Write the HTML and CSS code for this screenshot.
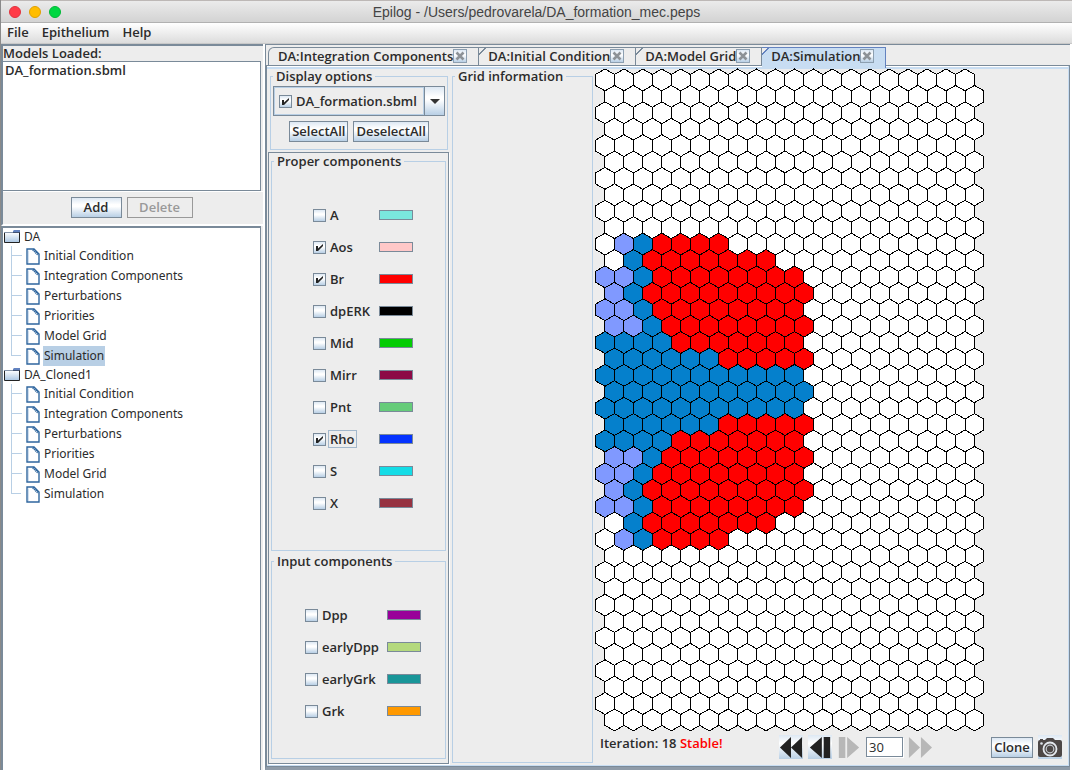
FILE: index.html
```html
<!DOCTYPE html>
<html lang="en">
<head>
<meta charset="utf-8">
<title>Epilog - /Users/pedrovarela/DA_formation_mec.peps</title>
<link rel="stylesheet" href="styles.css">
</head>
<body>
<svg class="defs" aria-hidden="true">
  <symbol id="folder" viewBox="0 0 16 14">
    <path d="M9 3V1l1-1h6v3z" fill="#6382bf"/>
    <path d="M.5 2.500h15v10H.5z" fill="url(#fold)" stroke="#222"/>
    <path d="M9 2h6" stroke="#6382bf"/>
    <path d="M0 2.500h9" stroke="#8493a8"/>
  </symbol>
  <symbol id="doc" viewBox="0 0 14 17">
    <path d="M1 1h7l5 5v10H1z" fill="#fff" stroke="#2f669e" stroke-width="1.400"/>
    <path d="M2.500 15V2.500" stroke="#cfdff0"/>
    <path d="M7 1.500l5.500 5.500" stroke="#2f669e" stroke-width="2.400" stroke-dasharray="1.300 .6"/>
  </symbol>
  <symbol id="close" viewBox="0 0 12 12">
    <path d="M2.500 2.500l7 7M9.500 2.500l-7 7" stroke="#8d9297" stroke-width="2.600"/>
  </symbol>
  <linearGradient id="fold" x1="0" y1="0" x2="0" y2="1"><stop offset="0" stop-color="#fff"/><stop offset="1" stop-color="#a9c5e2"/></linearGradient>
</svg>
<div class="window">
  <header class="titlebar">
    <div class="lights"><span class="light red"></span><span class="light amber"></span><span class="light green"></span></div>
    <h1 class="title">Epilog - /Users/pedrovarela/DA_formation_mec.peps</h1>
  </header>
  <nav class="menubar">
    <button class="menu" type="button">File</button>
    <button class="menu" type="button">Epithelium</button>
    <button class="menu" type="button">Help</button>
  </nav>
  <div class="body">
    <aside class="side">
      <section class="models">
        <h2 class="models-title">Models Loaded:</h2>
        <ul class="model-list"><li>DA_formation.sbml</li></ul>
        <div class="model-actions">
          <button class="btn add" type="button">Add</button>
          <button class="btn delete" type="button" disabled>Delete</button>
        </div>
      </section>
      <section class="tree" id="tree"></section>
    </aside>
    <main class="work">
      <div class="tabs">
        <div class="tab"><span>DA:Integration Components</span><button class="close" type="button" aria-label="Close"><svg><use href="#close"/></svg></button></div>
        <div class="tab"><span>DA:Initial Condition</span><button class="close" type="button" aria-label="Close"><svg><use href="#close"/></svg></button></div>
        <div class="tab"><span>DA:Model Grid</span><button class="close" type="button" aria-label="Close"><svg><use href="#close"/></svg></button></div>
        <div class="tab active"><span>DA:Simulation</span><button class="close" type="button" aria-label="Close"><svg><use href="#close"/></svg></button></div>
      </div>
      <div class="pane">
        <div class="options">
          <fieldset class="group display">
            <legend>Display options</legend>
            <div class="combo">
              <label class="combo-value"><input class="check" type="checkbox" checked>DA_formation.sbml</label>
              <button class="combo-arrow" type="button" aria-label="Open list"><svg viewBox="0 0 10 5"><path d="M0 0h10L5 5z" fill="#333"/></svg></button>
            </div>
            <div class="select-actions">
              <button class="btn" type="button">SelectAll</button>
              <button class="btn" type="button">DeselectAll</button>
            </div>
          </fieldset>
          <div class="scroll">
            <fieldset class="group proper">
              <legend>Proper components</legend>
              <div class="components" id="proper"></div>
            </fieldset>
            <fieldset class="group inputs">
              <legend>Input components</legend>
              <div class="components" id="inputs"></div>
            </fieldset>
          </div>
        </div>
        <fieldset class="group info"><legend>Grid information</legend></fieldset>
        <div class="stage">
          <svg class="hexes" id="hexes" viewBox="0 0 390 664" width="390" height="664" role="img" aria-label="Epithelium grid"></svg>
          <footer class="controls">
            <p class="status">Iteration: 18 <strong>Stable!</strong></p>
            <div class="player">
              <button class="step" type="button" aria-label="Rewind"><svg viewBox="0 0 26 23"><path d="M1 11.500L13 0v23zM13 11.500L25 0v23z" fill="#222"/></svg></button>
              <button class="step" type="button" aria-label="Step back"><svg viewBox="0 0 26 23"><path d="M2 11.500L15 0v23zM17 0h7v23h-7z" fill="#222"/></svg></button>
              <button class="step" type="button" aria-label="Step forward" disabled><svg viewBox="0 0 26 23"><path d="M2 0h7v23H2zM11 0l13 11.500L11 23z" fill="#b7b7b7"/></svg></button>
              <input class="count" type="text" value="30" aria-label="Number of iterations">
              <button class="step" type="button" aria-label="Fast forward" disabled><svg viewBox="0 0 26 23"><path d="M1 0l12 11.500L1 23zM14 0l12 11.500L14 23z" fill="#b7b7b7"/></svg></button>
            </div>
            <button class="btn clone" type="button">Clone</button>
            <button class="step camera" type="button" aria-label="Save picture"><svg viewBox="0 0 24 23"><path d="M2 3h3v1h2l2-2h6l2 2h5q2 0 2 2v13q0 2-2 2H2q-2 0-2-2V6q0-2 2-2z" fill="#4d4746"/><circle cx="12" cy="13" r="6.500" fill="#4d4746" stroke="#e4e8ee" stroke-width="1.800"/><circle cx="12" cy="13" r="3.800" fill="#4d4746" stroke="#c4c9d0" stroke-width="1.200"/><circle cx="3.500" cy="7.500" r="1.300" fill="#dfe5ec"/></svg></button>
          </footer>
        </div>
      </div>
    </main>
  </div>
</div>
<script src="app.js"></script>
</body>
</html>
```
FILE: styles.css
```css
* { box-sizing: border-box; }
body {
  margin: 0;
  font: 600 13px/16px "Open Sans", "Noto Sans", sans-serif;
  color: #2b2b2b;
  background: #ededed;
}
button, input { font: inherit; color: inherit; margin: 0; padding: 0; }
h1, h2, p, ul { margin: 0; padding: 0; font: inherit; list-style: none; }
.defs { position: absolute; width: 0; height: 0; }

.window { display: flex; flex-direction: column; min-height: 100vh; border-left: 1px solid #8a8a8a; }
.titlebar {
  display: grid;
  grid-template-columns: 1fr auto 1fr;
  align-items: center;
  height: 23px;
  padding-top: 1px;
  border-top: 1px solid #bdb8b6;
  border-bottom: 1px solid #b1b1b1;
  background: linear-gradient(#ebebeb, #d3d3d3);
}
.lights { display: flex; gap: 8px; padding-left: 8px; }
.light { width: 12px; height: 12px; border-radius: 50%; }
.red { background: #ff3b47; border: 1px solid #e0333e; }
.amber { background: #ffbd00; border: 1px solid #e0a000; }
.green { background: #00d742; border: 1px solid #00b836; }
.title { font: 14px/16px "Liberation Sans", Arial, sans-serif; color: #444; }
.menubar {
  display: flex;
  gap: 13px;
  height: 21px;
  padding: 0 6px 2px;
  background: linear-gradient(#fff, #dcdcdc);
  border-bottom: 1px solid #c8c8c8;
}
.menu { border: 0; background: none; }

.body { flex: 1; display: flex; gap: 2px; background: #fff; }
.side { flex: 0 0 262px; display: flex; flex-direction: column; background: #ededed; }
.models { border-top: 2px solid #7a8a99; border-left: 2px solid #7a8a99; border-bottom: 2px solid #fff; }
.models-title { height: 15px; line-height: 15px; }
.model-list { height: 130px; margin-right: 2px; padding: 0 2px; background: #fff; border: 1px solid #7a8a99; border-left: 0; }
.model-actions { display: flex; justify-content: center; gap: 5px; padding: 5px 3px 6px 0; border-top: 1px solid #fff; }
.btn {
  height: 21px;
  padding: 0 2px;
  border: 1px solid #7a8a99;
  background: linear-gradient(#dde8f3, #fff 35%, #fff 45%, #b8cfe5);
  line-height: 17px;
  white-space: nowrap;
}
.add { width: 51px; }
.delete { width: 66px; border-color: #999; background: #ededed; color: #999; }
.tree {
  flex: 1;
  background: #fff;
  border: 2px solid #7a8a99;
  border-right: 1px solid #7a8a99;
  border-bottom: 0;
  margin-right: 2px;
  font: 400 12px/16px "Noto Sans", "Open Sans", sans-serif;
}
.folder { display: flex; align-items: center; gap: 4px; height: 18px; padding: 0 1px; }
.folder svg { width: 16px; height: 14px; }
.leaves { margin-left: 8px; }
.leaf { display: flex; align-items: center; height: 20px; padding-left: 14px; background: linear-gradient(#b8cfe5, #b8cfe5) 0 9px / 10px 1px no-repeat; border-left: 1px solid #b8cfe5; }
.leaf:last-child { border-left: 0; padding-left: 15px; background: linear-gradient(#b8cfe5, #b8cfe5) 0 9px / 10px 1px no-repeat, linear-gradient(#b8cfe5, #b8cfe5) 0 0 / 1px 10px no-repeat; }
.leaf svg { width: 14px; height: 17px; margin-right: 3px; }
.leaf span { height: 20px; padding: 0 1px; line-height: 20px; }
.leaf .selected { background-color: #b8cfe5; }

.work { flex: 1; min-width: 0; display: flex; flex-direction: column; padding: 2px 0 0 0; background: #ededed; border: 1px solid #7a8a99; border-width: 1px 0 3px 1px; border-bottom-color: #8f9ba8; margin-right: 2px; }
.tabs { display: flex; padding-left: 2px; height: 18px; }
.tab {
  display: flex;
  align-items: center;
  padding: 0 11px 2px 9px;
  border: 1px solid #7a8a99;
  border-width: 1px 1px 0 0;
  line-height: 16px;
  white-space: nowrap;
  background: linear-gradient(135deg, #ededed 4px, #7a8a99 4px, #7a8a99 5px, #ededed 5px);
}
.tab:first-child { border-left: 1px solid #7a8a99; border-top-left-radius: 6px; background: #ededed; }
.tab.active { position: relative; height: 21px; padding-bottom: 5px; border-color: #6382bf; background: linear-gradient(135deg, #ededed 4px, #6382bf 4px, #6382bf 5px, #c8ddf2 5px); }
.close { flex: none; width: 14px; height: 14px; border: 1px solid #8d9fb0; background: linear-gradient(#dde8f3, #fff 40%, #b8cfe5); }
.close svg { display: block; width: 12px; height: 12px; }
.pane {
  flex: 1;
  display: flex;
  gap: 3px;
  padding: 2px 1px 0 0;
  border: 2px solid #c8ddf2;
  border-top: 1px solid #6382bf;
  border-left: 1px solid #6382bf;
  box-shadow: inset 0 1px #fff, inset 0 3px #c8ddf2;
  outline: 1px solid #7a8a99;
  outline-offset: -1px;
}
.group { margin: 0; padding: 0; min-width: 0; border: 1px solid #b8cfe5; }
.group legend { margin-left: 2px; padding: 0 3px; line-height: 16px; }
.options { flex: 0 0 182px; display: flex; flex-direction: column; }
.display { margin: 0 1px 2px 3px; padding: 2px 2px 7px; }
.display legend { margin-left: 0; }
.combo { display: flex; height: 30px; border: 1px solid #7a8a99; }
.combo-value { flex: 1; display: flex; align-items: center; gap: 4px; padding-left: 4px; border: 1px solid #b8cfe5; box-shadow: inset 0 0 0 1px #ededed; white-space: nowrap; }
.combo-arrow { width: 20px; border: 0; border-left: 1px solid #7a8a99; background: linear-gradient(#dde8f3, #fff 35%, #fff 45%, #b8cfe5); }
.combo-arrow svg { display: block; width: 10px; height: 5px; margin: 0 auto; }
.select-actions { display: flex; justify-content: center; gap: 5px; padding-top: 5px; }
.check { appearance: none; flex: none; width: 13px; height: 13px; border: 1px solid #7a8a99; background: linear-gradient(#dde8f3, #fff 35%, #fff 45%, #b8cfe5); }
.check:checked { background: url("data:image/svg+xml,%3Csvg xmlns='http://www.w3.org/2000/svg' width='11' height='11'%3E%3Cpath d='M2 4h2v2.500L9 2v2L4 9H2z' fill='%23222'/%3E%3C/svg%3E") no-repeat, linear-gradient(#dde8f3, #fff 35%, #fff 45%, #b8cfe5); }
.scroll { flex: 1; display: flex; flex-direction: column; gap: 2px; margin: 0 0 1px 1px; padding: 0 2px 4px; border: 1px solid #7a8a99; box-shadow: 1px 1px #fff; }
.proper { flex: 389 1 0; }
.inputs { flex: 200 1 0; }
.components { display: flex; flex-direction: column; gap: 12px; padding: 36px 32px 0 41px; }
.inputs .components { padding: 36px 24px 0 33px; }
.component { display: flex; align-items: center; justify-content: space-between; height: 20px; }
.component label { display: flex; align-items: center; gap: 2px; }
.component label span { padding: 0 1px; border: 1px solid transparent; }
.component .focused { border-color: #a3b8cc; }
.swatch { width: 34px; height: 10px; border: 1px solid #7a8a99; }
.info { flex: 0 0 141px; margin-bottom: 2px; }
.stage { flex: 1; min-width: 0; display: flex; flex-direction: column; margin-left: -1px; }
.hexes { flex: none; display: block; }
.hexes path { stroke: #000; stroke-width: 1; shape-rendering: crispEdges; }
.controls { display: flex; align-items: center; padding: 3px 5px 0 5px; }
.status { width: 179px; align-self: flex-start; }
.status strong { color: #f00; font-weight: inherit; }
.player { flex: 1; display: flex; align-items: center; gap: 5px; }
.step { width: 24px; height: 24px; border: 0; background: linear-gradient(#dde8f3, #fff 35%, #b8cfe5); }
.step:disabled { background: none; }
.step svg { display: block; width: 24px; height: 23px; }
.count { width: 37px; height: 20px; padding-left: 2px; border: 1px solid #7a8a99; background: #fff; font-weight: 400; box-shadow: 1px 1px #fff; }
.clone { width: 42px; margin-right: 5px; }
```
FILE: app.js
```js
const leaves = ["Initial Condition", "Integration Components", "Perturbations", "Priorities", "Model Grid", "Simulation"];
document.getElementById("tree").innerHTML = ["DA", "DA_Cloned1"].map((name, i) =>
  `<div class="folder"><svg><use href="#folder"/></svg>${name}</div><ul class="leaves">` +
  leaves.map((leaf, j) => `<li class="leaf"><svg><use href="#doc"/></svg><span class="${i === 0 && j === 5 ? "selected" : ""}">${leaf}</span></li>`).join("") +
  "</ul>").join("");

const proper = [["A", "#7ae7de"], ["Aos", "#ffc8c8", 1], ["Br", "#ff0000", 1], ["dpERK", "#000000"], ["Mid", "#05cc05"],
  ["Mirr", "#8c0a46"], ["Pnt", "#66cc7a"], ["Rho", "#0433ff", 1], ["S", "#14dce6"], ["X", "#963241"]];
const inputs = [["Dpp", "#990099"], ["earlyDpp", "#b4d97d"], ["earlyGrk", "#199699"], ["Grk", "#ff9900"]];
const rows = list => list.map(([name, color, on]) =>
  `<div class="component"><label><input class="check" type="checkbox"${on ? " checked" : ""}><span class="${name === "Rho" ? "focused" : ""}">${name}</span></label>` +
  `<button class="swatch" type="button" aria-label="${name} colour" style="background:${color}"></button></div>`).join("");
document.getElementById("proper").innerHTML = rows(proper);
document.getElementById("inputs").innerHTML = rows(inputs);

// Cell states from row 10 down to the symmetry row 19: w white, l lavender, b blue, r red.
const half = ["wlbrrrr", "wbrrrrrrr", "llbrrrrrrrr", "lbrrrrrrrrr", "llbrrrrrrrr", "llbrrrrrrrr", "bbbbrrrrrrr", "bbbbbbrrrrr", "bbbbbbbbbbb", "bbbbbbbbbbb"];
const fills = { w: "#fff", l: "#8099ff", b: "#0580cc", r: "#f00" };
const R = 10.94, W = R * Math.sqrt(3);
let out = "";
for (let row = 0; row < 40; row++) {
  const line = half[row <= 19 ? row - 10 : 28 - row] || "";
  for (let col = 0; col < 20; col++) {
    const x = 0.5 + W / 2 + col * W + (row % 2) * W / 2, y = 1 + R + row * 1.5 * R;
    const d = [[0, -R], [W / 2, -R / 2], [W / 2, R / 2], [0, R], [-W / 2, R / 2], [-W / 2, -R / 2]]
      .map(([a, b]) => (x + a).toFixed(2) + " " + (y + b).toFixed(2)).join("L");
    out += `<path d="M${d}Z" fill="${fills[line[col] || "w"]}"/>`;
  }
}
document.getElementById("hexes").innerHTML = out;
```
